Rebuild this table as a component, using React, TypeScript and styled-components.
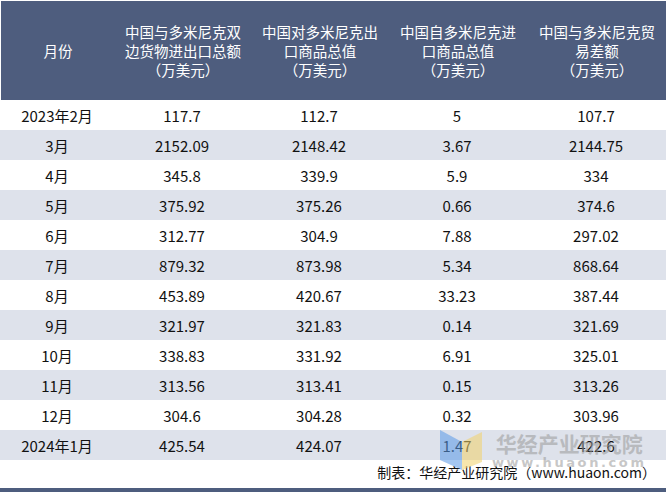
import React from "react";
import styled, { createGlobalStyle } from "styled-components";

interface Row {
    month: string;
    total: string;
    exp: string;
    imp: string;
    balance: string;
}

const rows: Row[] = [
    { month: "2023年2月", total: "117.7", exp: "112.7", imp: "5", balance: "107.7" },
    { month: "3月", total: "2152.09", exp: "2148.42", imp: "3.67", balance: "2144.75" },
    { month: "4月", total: "345.8", exp: "339.9", imp: "5.9", balance: "334" },
    { month: "5月", total: "375.92", exp: "375.26", imp: "0.66", balance: "374.6" },
    { month: "6月", total: "312.77", exp: "304.9", imp: "7.88", balance: "297.02" },
    { month: "7月", total: "879.32", exp: "873.98", imp: "5.34", balance: "868.64" },
    { month: "8月", total: "453.89", exp: "420.67", imp: "33.23", balance: "387.44" },
    { month: "9月", total: "321.97", exp: "321.83", imp: "0.14", balance: "321.69" },
    { month: "10月", total: "338.83", exp: "331.92", imp: "6.91", balance: "325.01" },
    { month: "11月", total: "313.56", exp: "313.41", imp: "0.15", balance: "313.26" },
    { month: "12月", total: "304.6", exp: "304.28", imp: "0.32", balance: "303.96" },
    { month: "2024年1月", total: "425.54", exp: "424.07", imp: "1.47", balance: "422.6" },
];

const headers: string[][] = [
    ["月份"],
    ["中国与多米尼克双", "边货物进出口总额", "（万美元）"],
    ["中国对多米尼克出", "口商品总值", "（万美元）"],
    ["中国自多米尼克进", "口商品总值", "（万美元）"],
    ["中国与多米尼克贸", "易差额", "（万美元）"],
];

const GlobalStyle = createGlobalStyle`
    html, body {
        margin: 0;
        padding: 0;
        background: #fff;
    }
    body {
        font-family: "Noto Sans CJK SC", "DejaVu Sans", sans-serif;
    }
`;

const Page = styled.div`
    position: relative;
    width: 666px;
    height: 492px;
    overflow: hidden;
    background: #fff;
    display: flex;
    flex-direction: column;
`;

const cols = "114px 136px 138px 138px 140px";

const Header = styled.div`
    display: grid;
    grid-template-columns: ${cols};
    height: 99px;
    margin: 1px 0 0 1px;
    background: #4e5d7e;
    color: #fff;
`;

const HeadCell = styled.div`
    display: flex;
    flex-direction: column;
    align-items: center;
    justify-content: center;
    font-size: 14.5px;
    line-height: 19px;
    text-align: center;
`;

const Body = styled.div`
    display: flex;
    flex-direction: column;
`;

const DataRow = styled.div<{ $alt: boolean }>`
    display: grid;
    grid-template-columns: ${cols};
    height: 30px;
    align-items: center;
    background: ${(p) => (p.$alt ? "#dee2eb" : "#fff")};
    color: #111;
    font-size: 15px;
`;

const Cell = styled.div`
    text-align: center;
`;

const Footer = styled.div`
    margin-top: auto;
    display: flex;
    justify-content: flex-end;
    align-items: center;
    height: 24px;
    padding: 0 10px 4px 0;
    font-size: 14px;
    color: #111;
`;

const BottomBar = styled.div`
    height: 4px;
    background: #4e5d7e;
`;

const Watermark = styled.div`
    position: absolute;
    left: 440px;
    top: 430px;
    display: flex;
    gap: 8px;
    opacity: 0.55;
    pointer-events: none;
`;

const WmText = styled.div`
    display: flex;
    flex-direction: column;
    align-items: center;
    color: #9a9a9a;
    font-weight: bold;
`;

const WmName = styled.div`
    font-size: 21px;
    line-height: 26px;
`;

const WmUrl = styled.div`
    font-size: 13px;
    line-height: 14px;
    letter-spacing: 2.6px;
    font-family: "DejaVu Sans", sans-serif;
`;

const Logo = () => (
    <svg width="44" height="40" viewBox="0 0 44 40">
        <polygon points="0,0 22,12 22,40 0,30" fill="#5b9be8" />
        <polygon points="22,12 42,2 42,32 22,40" fill="#f2d36b" />
    </svg>
);

export default function App() {
    return (
        <Page>
            <GlobalStyle />
            <Header>
                {headers.map((h, i) => (
                    <HeadCell key={i}>
                        {h.map((line) => (
                            <div key={line}>{line}</div>
                        ))}
                    </HeadCell>
                ))}
            </Header>
            <Body>
                {rows.map((r, i) => (
                    <DataRow key={r.month} $alt={i % 2 === 1}>
                        <Cell>{r.month}</Cell>
                        <Cell>{r.total}</Cell>
                        <Cell>{r.exp}</Cell>
                        <Cell>{r.imp}</Cell>
                        <Cell>{r.balance}</Cell>
                    </DataRow>
                ))}
            </Body>
            <Footer>制表：华经产业研究院（www.huaon.com）</Footer>
            <BottomBar />
            <Watermark>
                <Logo />
                <WmText>
                    <WmName>华经产业研究院</WmName>
                    <WmUrl>www.huaon.com</WmUrl>
                </WmText>
            </Watermark>
        </Page>
    );
}
